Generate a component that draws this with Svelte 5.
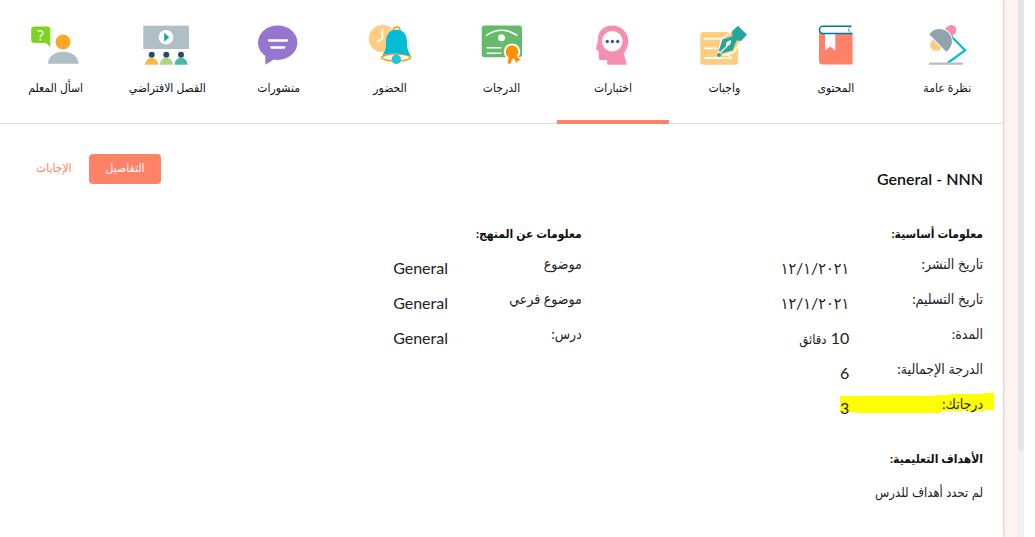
<script>
  const tabs = [
    { id: 'overview', label: 'نظرة عامة' },
    { id: 'content', label: 'المحتوى' },
    { id: 'assignments', label: 'واجبات' },
    { id: 'exams', label: 'اختبارات' },
    { id: 'grades', label: 'الدرجات' },
    { id: 'attendance', label: 'الحضور' },
    { id: 'posts', label: 'منشورات' },
    { id: 'classroom', label: 'الفصل الافتراضي' },
    { id: 'ask', label: 'اسأل المعلم' }
  ];
  let active = $state('exams');
  let view = $state('details');

  const basics = [
    { label: 'تاريخ النشر:', value: '١٢/١/٢٠٢١', date: true },
    { label: 'تاريخ التسليم:', value: '١٢/١/٢٠٢١', date: true },
    { label: 'المدة:', value: '10', unit: 'دقائق' },
    { label: 'الدرجة الإجمالية:', value: '6' },
    { label: 'درجاتك:', value: '3', marked: true }
  ];
  const syllabus = [
    { label: 'موضوع', value: 'General' },
    { label: 'موضوع فرعي', value: 'General' },
    { label: 'درس:', value: 'General' }
  ];
</script>

{#snippet icon(id)}
  <svg class="icon" viewBox="0 0 48 44" aria-hidden="true">
    {#if id === 'overview'}
      <path d="M28.7 12.7 42 26.3 24.7 39" fill="none" stroke="#00bcd4" stroke-width="2.2" />
      <path d="M19 7.500 24.600 2.500a5 5 0 0 1 7.300 7L27 14.500z" fill="#f48fb1" />
      <circle cx="13" cy="21" r="6" fill="#ffcc80" />
      <path d="M6.300 10.300A12.400 12.400 0 1 1 23.300 27.700z" fill="#90a4ae" stroke="#fff" stroke-width="1.600" paint-order="stroke" />
      <path d="M6 39.700h34" stroke="#b0bec5" stroke-width="2.200" />
    {:else if id === 'content'}
      <path d="M7 6v31a3.600 3.600 0 0 0 3.600 3.600h30V9.500H10z" fill="#ff8268" />
      <path d="M13 9h10.300v17.700l-5.100-4.200-5.200 4.200z" fill="#fff" />
      <path d="M39.500 2.300H11a3.500 3.500 0 0 0 0 7.100h29.500" fill="#fff" stroke="#00779b" stroke-width="1.500" />
      <path d="M38.500 3q-4 2.800 0 5.700" fill="none" stroke="#26a69a" stroke-width="1" />
    {:else if id === 'assignments'}
      <rect x="0.300" y="8" width="37.800" height="32.700" rx="3" fill="#ffcc80" />
      <path d="M4 14.700h17M4 24.300h13M4 34h27.500" stroke="#fff" stroke-width="1.800" />
      <path d="M17.500 33 21.500 15 32 7l9 9.800-7 11.500-11 3a6 6 0 0 1 8 2.700" fill="#ffcc80" stroke="#fff" stroke-width="1.400" />
      <path d="M38 1.700 47 10.700 41 17 36.500 16.500 32.700 26.300 21.500 29.500 18.800 26.700 22.500 15.600 32.300 12.300 31.800 7.400z" fill="#26a69a" />
      <path d="m19.500 29.500 8-8" stroke="#fff" stroke-width="1.300" />
      <path d="M31 16.200c-4 .5-5.500 3-4.800 5.500 2.600.5 4.800-1.200 4.800-5.500z" fill="#fff" />
      <circle cx="19" cy="31" r="2" fill="#26a69a" />
    {:else if id === 'exams'}
      <path d="M23.300 1.400C14 1.400 8.800 8 8.800 15.500c0 4-1.800 7-1.800 9.300 0 1.500 2.500 1.300 2.500 2.700l.4 6.300c.1 2 1.500 2.500 3.100 2.400l5-.3.3 4.800h19.600l-3-11C37 26 39.300 22 39.300 16.700 39.300 8 32 1.400 23.300 1.400z" fill="#f48fb1" />
      <circle cx="23.300" cy="17.300" r="10.300" fill="#fff" />
      <g fill="#3f51b5"><circle cx="18.200" cy="17.500" r="1.700" /><circle cx="23.400" cy="17.500" r="1.700" /><circle cx="28.700" cy="17.500" r="1.700" /></g>
    {:else if id === 'grades'}
      <rect x="3.700" y="1.400" width="40.300" height="31.800" rx="3" fill="#66bb6a" />
      <path d="M8.300 11.500q15.500-10.500 31 0M8.700 23.700h14.600M8.700 29.200h14.600" fill="none" stroke="#fff" stroke-width="1.600" />
      <circle cx="23.500" cy="13.700" r="3.500" fill="#fff" />
      <circle cx="34" cy="27.700" r="8.300" fill="#fff" />
      <path d="m31 31-1.300 8.300 2.500.8 1.900-4.100 1.600-2 2.800 5.200 1.200-2.500 2.800-.2-5.800-7.500z" fill="#ff9100" />
      <circle cx="34" cy="27.700" r="6.300" fill="#ff9100" />
    {:else if id === 'attendance'}
      <circle cx="16.400" cy="14.700" r="13.600" fill="#ffcc80" />
      <path d="M16.400 5.200v9.500L11 18" fill="none" stroke="#fff" stroke-width="1.700" />
      <path d="M27.300 7.500V6.300a3.400 3.400 0 0 1 6.800 0v1.200" fill="none" stroke="#ff9800" stroke-width="1.500" />
      <ellipse cx="30.200" cy="33.500" rx="14.400" ry="3.600" fill="#fff" stroke="#ff9800" stroke-width="1.500" />
      <path d="M16 31.500c4-5 4-8 4-14 0-7 4-12 10.500-12s10.500 5 10.500 12c0 6 .5 9 4.200 15-9-3.700-21-3.700-29.200-1z" fill="#00bcd4" />
      <circle cx="30.300" cy="35.300" r="4.800" fill="#26c6da" />
    {:else if id === 'posts'}
      <ellipse cx="22.700" cy="18.700" rx="19.700" ry="17.200" fill="#9575cd" />
      <path d="M10.300 30v10.700l10-6.300z" fill="#9575cd" />
      <path d="M14 16.500h18M16.300 23.500h13" stroke="#fff" stroke-width="2.300" stroke-linecap="round" />
    {:else if id === 'classroom'}
      <rect x="0.300" y="1.700" width="45.700" height="23.300" fill="#b0bec5" />
      <circle cx="23" cy="13.200" r="7.300" fill="#fff" />
      <path d="M21.200 8.700v9l5-4.500z" fill="#00b494" />
      <g fill="#264f5b"><circle cx="8.700" cy="30.800" r="3" /><circle cx="23.300" cy="30.800" r="3" /><circle cx="38" cy="30.800" r="3" /></g>
      <path d="M2.200 40.700a6.500 7 0 0 1 13 0z" fill="#ffb74d" />
      <path d="M16.800 40.700a6.500 7 0 0 1 13 0z" fill="#aed581" />
      <path d="M31.500 40.700a6.500 7 0 0 1 13 0z" fill="#4db6ac" />
    {:else}
      <path d="M2.500 2.400H15A3.300 3.300 0 0 1 18.300 5.700V23L14 19H2.500A3.300 3.300 0 0 1-.8 15.700V5.700A3.300 3.300 0 0 1 2.500 2.400z" fill="#7ed321" />
      <path d="M5.400 6.900h3.500q2 0 2 2.100t-2.500 2.400v2.300" fill="none" stroke="#fff" stroke-width="1.400" />
      <path d="M7.500 15h1.800v1.600H7.500z" fill="#fff" />
      <circle cx="31" cy="18" r="7.500" fill="#f9a825" />
      <path d="M16 39.700c0-7 6-12 15.200-12s15.300 5 15.300 12z" fill="#b0bec5" />
    {/if}
  </svg>
{/snippet}

{#snippet details(rows)}
  <dl>
    {#each rows as row}
      <div class="row">
        {#if row.marked}
          <svg class="marker" viewBox="0 0 154 20" preserveAspectRatio="none" aria-hidden="true">
            <path d="M0 3h96V2h13V1h34V0h11v17h-10v1h-44v2H16v-1H0z" fill="#ff0" />
          </svg>
        {/if}
        <dt>{row.label}</dt>
        <dd class:date={row.date}>{row.value}{#if row.unit}{' '}<small>{row.unit}</small>{/if}</dd>
      </div>
    {/each}
  </dl>
{/snippet}

<div class="shell" dir="rtl">
  <div class="track"><div class="thumb"></div></div>
  <div class="page">
    <nav>
      {#each tabs as tab}
        <a href={'#' + tab.id} class:active={active === tab.id} onclick={() => (active = tab.id)}>
          {@render icon(tab.id)}
          <span>{tab.label}</span>
        </a>
      {/each}
    </nav>
    <main>
      <header>
        <h1 dir="ltr">General - NNN</h1>
        <div class="switch">
          <button class:on={view === 'details'} onclick={() => (view = 'details')}>التفاصيل</button>
          <button class:on={view === 'answers'} onclick={() => (view = 'answers')}>الإجابات</button>
        </div>
      </header>
      <div class="columns">
        <section>
          <h2>معلومات أساسية:</h2>
          {@render details(basics)}
        </section>
        <section>
          <h2>معلومات عن المنهج:</h2>
          {@render details(syllabus)}
        </section>
      </div>
      <section class="goals">
        <h2>الأهداف التعليمية:</h2>
        <p>لم تحدد أهداف للدرس</p>
      </section>
    </main>
  </div>
</div>

<style>
  :global(body) {
    margin: 0;
    background: #fff;
  }
  .shell {
    display: flex;
    min-height: 100vh;
    box-sizing: border-box;
    padding-right: 11px;
    overflow: hidden;
    font-family: Lato, "DejaVu Sans Condensed", "DejaVu Sans", sans-serif;
    color: #222;
  }
  .track {
    width: 6px;
    background: #f1f1f1;
  }
  .thumb {
    height: 84vh;
    background: #e5e5e5;
    border-radius: 0 0 3px 3px;
  }
  .page {
    flex: 1;
    margin-right: 15px;
    background: #fff;
    box-shadow: 0 0 3px 0 #aaa, 15px 0 0 #fff3f2;
  }
  nav {
    display: grid;
    grid-template-columns: repeat(9, 1fr);
    border-bottom: 1px solid #ddd;
  }
  nav a {
    display: flex;
    flex-direction: column;
    align-items: center;
    gap: 10px;
    height: 96px;
    padding-top: 24px;
    margin-bottom: -1px;
    border-bottom: 4px solid transparent;
    color: #111;
    font-size: 12px;
    line-height: 20px;
    white-space: nowrap;
    text-decoration: none;
  }
  nav a.active {
    border-color: #ff8268;
  }
  .icon {
    width: 48px;
    height: 44px;
    overflow: visible;
  }
  main {
    padding: 30px 20px 0;
  }
  header {
    display: flex;
    justify-content: space-between;
  }
  h1,
  h2 {
    margin: 0;
    color: #111;
  }
  h1 {
    padding-top: 13px;
    font-size: 16px;
    font-weight: 600;
    line-height: 24px;
  }
  .switch {
    display: flex;
    margin-left: -1px;
  }
  button {
    height: 30px;
    padding: 0 17px 4px;
    border: 0;
    border-radius: 4px;
    background: none;
    color: #ff8268;
    font-family: inherit;
    font-size: 12px;
  }
  button.on {
    background: #ff8268;
    color: #fff;
  }
  .columns {
    display: grid;
    grid-template-columns: 5fr 5fr 2fr;
    padding-top: 32px;
  }
  h2 {
    font-size: 12px;
    font-weight: 700;
    line-height: 22px;
  }
  dl {
    margin: 0;
    padding-top: 5px;
  }
  .row {
    position: relative;
    display: grid;
    grid-template-columns: 1fr 2fr;
    height: 35px;
  }
  dt {
    position: relative;
    font-size: 14px;
    line-height: 28px;
    white-space: nowrap;
  }
  dd {
    position: relative;
    margin: 0;
    font-size: 16px;
    line-height: 36px;
  }
  dd small {
    font-size: 13px;
  }
  dd.date {
    direction: ltr;
    text-align: right;
  }
  .marker {
    position: absolute;
    top: 3px;
    right: -11px;
    width: calc(33% + 22px);
    height: 20px;
  }
  .goals {
    padding-top: 23px;
  }
  .goals p {
    margin: 0;
    padding-top: 11px;
    font-size: 13px;
    line-height: 22px;
  }
</style>
